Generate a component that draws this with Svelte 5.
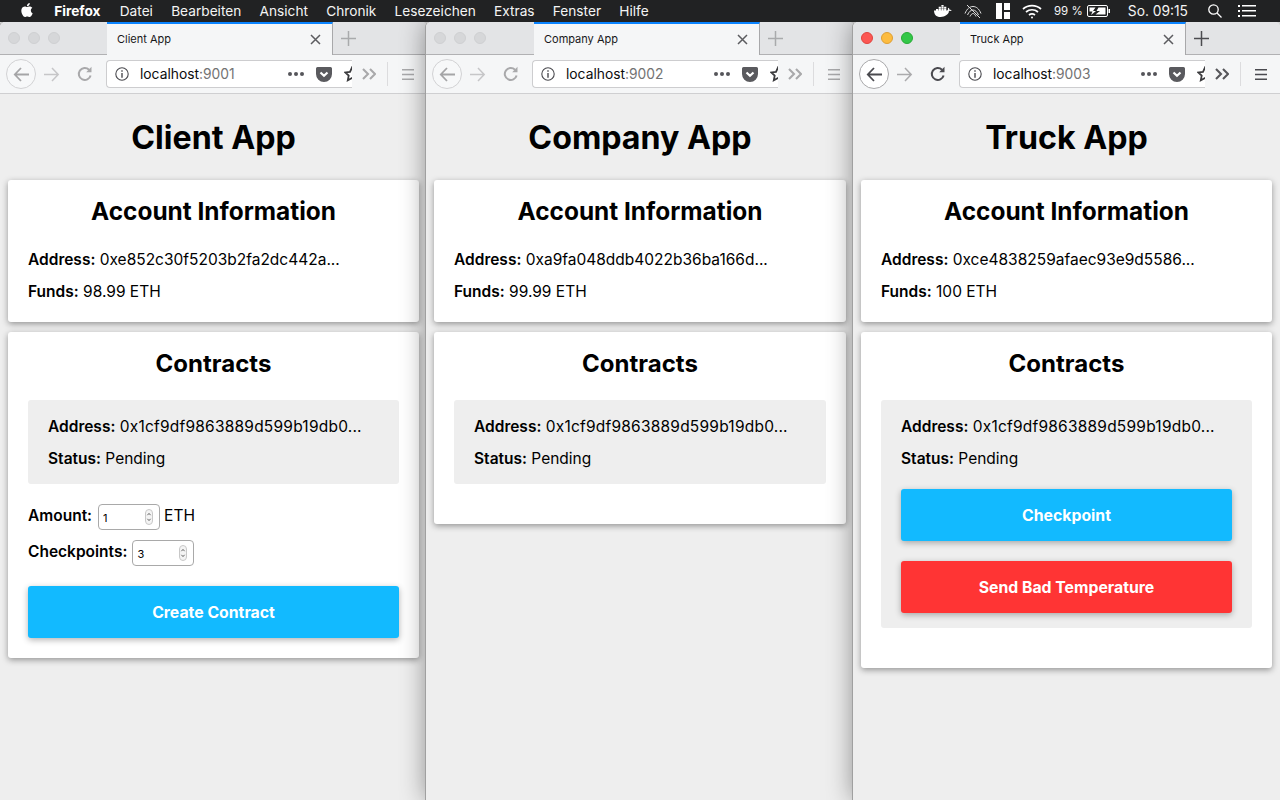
<script>
  const menus = ['Datei','Bearbeiten','Ansicht','Chronik','Lesezeichen','Extras','Fenster','Hilfe'];
  const windows = [
    { title:'Client App', port:'9001', address:'0xe852c30f5203b2fa2dc442a...', funds:'98.99 ETH', kind:'client', active:false },
    { title:'Company App', port:'9002', address:'0xa9fa048ddb4022b36ba166d...', funds:'99.99 ETH', kind:'company', active:false },
    { title:'Truck App', port:'9003', address:'0xce4838259afaec93e9d5586...', funds:'100 ETH', kind:'truck', active:true }
  ];
  const contract = '0x1cf9df9863889d599b19db0...';
</script>

{#snippet numberField(value)}
  <span class="num">
    <input type="text" value={value} readonly aria-label="number" />
    <svg class="spin" width="8" height="16" viewBox="0 0 8 16">
      <rect x=".5" y=".5" width="7" height="15" rx="3.5" fill="#f4f4f4" stroke="#c8c8c8"/>
      <path d="M2.4 6.2 4 4.4l1.6 1.8M2.4 9.8 4 11.6l1.6-1.8" fill="none" stroke="#555" stroke-width=".9"/>
    </svg>
  </span>
{/snippet}

<div class="screen">
  <header class="menubar">
    <div class="menu-left">
      <svg class="apple" width="14" height="16" viewBox="0 0 24 24" fill="#fff"><path d="M12.152 6.896c-.948 0-2.415-1.078-3.96-1.04-2.04.027-3.91 1.183-4.961 3.014-2.117 3.675-.546 9.103 1.519 12.09 1.013 1.454 2.208 3.09 3.792 3.039 1.52-.065 2.09-.987 3.935-.987 1.831 0 2.35.987 3.96.948 1.637-.026 2.676-1.48 3.676-2.948 1.156-1.688 1.636-3.325 1.662-3.415-.039-.013-3.182-1.221-3.22-4.857-.026-3.04 2.48-4.494 2.597-4.559-1.429-2.09-3.623-2.324-4.39-2.376-2-.156-3.675 1.09-4.61 1.09zM15.53 3.83c.843-1.012 1.4-2.427 1.245-3.83-1.207.052-2.662.805-3.532 1.818-.78.896-1.454 2.338-1.273 3.714 1.338.104 2.715-.688 3.559-1.701"/></svg>
      <strong class="app-name">Firefox</strong>
      {#each menus as m}<span>{m}</span>{/each}
    </div>
    <div class="menu-right">
      <svg class="st-docker" width="18" height="13" viewBox="0 0 18 13" fill="#fff"><path d="M0 6.6h14c.6-.1 1.1-.4 1.3-.8.6.2 1.7.2 2.5-.5-.5-.6-1.400-.8-2.200-.6-.1-.9-.6-1.500-1.200-1.900-.6.600-.8 1.600-.4 2.300-.4.200-.8.300-1.200.3H0c0 3.600 2 6.600 6.600 6.600 4.400 0 7.400-2.300 8.600-5.400z"/><path d="M2 4h2.200v2H2zM4.700 4h2.200v2H4.700zM7.400 4h2.200v2H7.400zM10.100 4h2.200v2h-2.200zM4.700 1.700h2.200v2H4.700zM7.400 1.700h2.200v2H7.400zM10.100 1.700h2.200v2h-2.200zM7.400-.6h2.200v2H7.400z"/></svg>
      <svg class="st-radio" width="18" height="15" viewBox="0 0 18 15" fill="none" stroke="#ddd" stroke-width="1"><path d="M1 9.500C3 4.500 6 2.500 9 2.500s6 2 8 7M3.500 11C5 7.500 7 6 9 6s4 1.500 5.500 5M6 12.500C7 10.500 8 9.500 9 9.500s2 1 3 3M3 1l13 13"/></svg>
      <svg class="st-bars" width="14" height="16" viewBox="0 0 14 16" fill="#fff"><path d="M0 0h6v16H0zM8 0h6v7H8zM8 9h6v7H8z"/></svg>
      <svg class="st-wifi" width="20" height="15" viewBox="0 0 20 15" fill="none" stroke="#fff" stroke-width="1.700"><path d="M1 5c5-4.500 13-4.500 18 0M4 8c3.500-3 8.500-3 12 0M7 11c1.700-1.400 4.300-1.400 6 0"/><circle cx="10" cy="13.500" r="1" fill="#fff" stroke="none"/></svg>
      <span class="st-pct">99 %</span>
      <svg class="st-batt" width="23" height="12" viewBox="0 0 23 12"><rect x=".5" y=".5" width="20" height="11" rx="1.500" fill="none" stroke="#fff"/><rect x="21.500" y="4" width="1.500" height="4" fill="#fff"/><path d="M2.500 2.500h6L6 6h3l-5 4 1.500-3.500h-3zM11.500 2.500h7v7h-10l4.500-3.500h-3.500z" fill="#fff"/></svg>
      <span class="st-clock">So. 09:15</span>
      <svg class="st-search" width="14" height="14" viewBox="0 0 14 14" fill="none" stroke="#fff" stroke-width="1.300"><circle cx="5.500" cy="5.500" r="4.700"/><path d="m9 9 4.500 4.500"/></svg>
      <svg class="st-list" width="18" height="12" viewBox="0 0 18 12" fill="#fff"><path d="M0 0h2v2H0zM0 5h2v2H0zM0 10h2v2H0zM4 0h14v1.600H4zM4 5h14v1.600H4zM4 10h14v1.600H4z"/></svg>
    </div>
  </header>

  <div class="desktop">
    {#each windows as w}
      <section class="win" class:active={w.active}>
        <div class="tabbar">
          <div class="lights">
            <i class="light l-close"></i><i class="light l-min"></i><i class="light l-zoom"></i>
          </div>
          <div class="tab">
            <span class="tab-title">{w.title}</span>
            <svg class="tab-close" width="11" height="11" viewBox="0 0 11 11" stroke-width="1.500" fill="none"><path d="m1 1 9 9M10 1l-9 9"/></svg>
          </div>
          <svg class="newtab" width="15" height="15" viewBox="0 0 15 15" stroke-width="1.500" fill="none"><path d="M7.500 0v15M0 7.500h15"/></svg>
        </div>

        <div class="toolbar">
          <span class="back">
            <svg width="17" height="15" viewBox="0 0 17 15" fill="none" stroke-width="1.800"><path d="M16 7.500H2M8 1 1.800 7.500 8 14"/></svg>
          </span>
          <svg class="fwd" width="17" height="15" viewBox="0 0 17 15" fill="none" stroke-width="1.500"><path d="M1 7.500h14M9 1l6.200 6.500L9 14"/></svg>
          <svg class="reload" width="16" height="16" viewBox="0 0 16 16" fill="none" stroke-width="2"><path d="M13.600 9.500A6 6 0 1 1 12 3.700"/><path d="M14.500.8v5.400H9.200z" fill="currentColor" stroke="none"/></svg>
          <div class="url">
            <svg class="info" width="14" height="14" viewBox="0 0 14 14" fill="none"><circle cx="7" cy="7" r="6.200" stroke="#4a4a4f" stroke-width="1.100"/><path d="M6.300 3.300h1.400v1.400H6.300zM6.300 6h1.400v4.700H6.300z" fill="#4a4a4f"/></svg>
            <span class="host">localhost<span class="port">:{w.port}</span></span>
            <span class="dots"><i></i><i></i><i></i></span>
            <svg class="pocket" width="16" height="15" viewBox="0 0 16 15"><path d="M1.500 0h13A1.500 1.500 0 0 1 16 1.500V7A8 8 0 0 1 0 7V1.500A1.500 1.500 0 0 1 1.500 0z" fill="#5a5a5e"/><path d="m4.500 5.500 3.500 3.300 3.500-3.300" fill="none" stroke="#fff" stroke-width="2.200"/></svg>
            <svg class="star" width="16" height="16" viewBox="0 0 16 16" fill="none" stroke="#3a3a3d" stroke-width="1.800"><path d="m8 1.500 2 4.300 4.700.6-3.400 3.200.9 4.700L8 12l-4.200 2.300.9-4.700L1.300 6.400 6 5.800z"/></svg>
          </div>
          <svg class="more" width="14" height="12" viewBox="0 0 14 12" fill="none" stroke-width="2.100"><path d="m1 1 5 5-5 5M8 1l5 5-5 5"/></svg>
          <span class="sep"></span>
          <svg class="burger" width="12" height="11" viewBox="0 0 12 11"><path d="M0 0h12v1.500H0zM0 4.700h12v1.500H0zM0 9.500h12V11H0z" fill="currentColor"/></svg>
        </div>

        <main class="page">
          <h1>{w.title}</h1>
          <div class="card">
            <h2>Account Information</h2>
            <p><b>Address:</b> {w.address}</p>
            <p><b>Funds:</b> {w.funds}</p>
          </div>
          <div class="card contracts">
            <h2>Contracts</h2>
            <div class="contract">
              <p><b>Address:</b> <span class="hash">{contract}</span></p>
              <p><b>Status:</b> Pending</p>
              {#if w.kind === 'truck'}
                <button class="btn btn-blue first">Checkpoint</button>
                <button class="btn btn-red">Send Bad Temperature</button>
              {/if}
            </div>
            {#if w.kind === 'client'}
              <div class="field amount"><b>Amount:</b> {@render numberField('1')} <span class="unit">ETH</span></div>
              <div class="field second"><b>Checkpoints:</b> {@render numberField('3')}</div>
              <button class="btn btn-blue create">Create Contract</button>
            {/if}
          </div>
        </main>
      </section>
    {/each}
  </div>
</div>

<style>
  :global(body) { margin: 0; background: #eee; }
  .screen { width: 1280px; height: 800px; overflow: hidden; display: flex; flex-direction: column; font-family: Inter, "Liberation Sans", sans-serif; color: #000; }

  .menubar { height: 22px; flex: none; background: #212223; color: #f4f4f4; display: flex; justify-content: space-between; align-items: center; font-size: 13.700px; position: relative; z-index: 5; }
  .menu-left { display: flex; align-items: center; gap: 18.200px; padding-left: 20px; }
  .apple { margin-right: 2px; margin-top: -2px; }
  .app-name { font-weight: 700; color: #fff; margin-right: 1px; }
  .menu-right { display: flex; align-items: center; padding-right: 24px; }
  .st-radio { margin-left: 12px; }
  .st-bars { margin-left: 14px; }
  .st-wifi { margin-left: 12px; }
  .st-pct { margin-left: 12px; font-size: 11.500px; }
  .st-batt { margin-left: 4px; }
  .st-clock { margin-left: 18px; font-size: 13.800px; }
  .st-search { margin-left: 20px; }
  .st-list { margin-left: 16px; }

  .desktop { flex: 1; display: flex; min-height: 0; }
  .win { flex: 0 0 427px; display: flex; flex-direction: column; background: #eee; border-radius: 5px 5px 0 0; position: relative; box-shadow: -1px 0 0 #a0a0a0, 0 0 26px rgba(0,0,0,.42); clip-path: inset(0 0 0 -40px); }
  .win + .win { margin-left: -1px; }
  .win:nth-child(2) { flex-basis: 428px; }

  .tabbar { height: 33px; flex: none; background: #e3e4e6; border-bottom: 1px solid #b1b1b3; box-sizing: border-box; display: flex; align-items: center; border-radius: 5px 5px 0 0; }
  .lights { width: 107px; flex: none; display: flex; gap: 8px; padding-left: 8px; box-sizing: border-box; }
  .light { width: 12px; height: 12px; border-radius: 50%; background: #d6d7d9; border: 1px solid #cfd0d2; box-sizing: border-box; }
  .win.active .l-close { background: #fc5753; border-color: #e0443e; }
  .win.active .l-min { background: #fdbc40; border-color: #de9f34; }
  .win.active .l-zoom { background: #33c748; border-color: #27aa35; }
  .tab { width: 226px; height: 33px; flex: none; box-sizing: border-box; background: #f5f6f7; border-top: 2px solid #0a84ff; border-right: 1px solid #a8a8aa; display: flex; align-items: center; justify-content: space-between; padding: 0 11px 0 10px; }
  .win:nth-child(2) .tab { margin-left: 1px; }
  .tab-title { font-size: 11px; color: #18181a; }
  .tab-close { stroke: #5c5c60; }
  .newtab { margin-left: 8px; stroke: #a9aaac; }
  .win.active .newtab { stroke: #4c4c50; }

  .toolbar { height: 39px; flex: none; box-sizing: border-box; background: #f5f6f7; border-bottom: 1px solid #cfcfd1; display: flex; align-items: center; color: #a9a9ab; position: relative; }
  .back { width: 30px; height: 30px; margin-left: 6px; flex: none; box-sizing: border-box; border: 1px solid #d2d2d4; border-radius: 50%; background: #f7f8f9; display: flex; align-items: center; justify-content: center; }
  .back svg { stroke: #a5a5a7; }
  .win.active .back { border-color: #a9a9ab; background: #fff; }
  .win.active .back svg { stroke: #4a4a4f; }
  .fwd { margin-left: 7px; stroke: #c6c6c8; flex: none; }
  .reload { margin-left: 17px; stroke: #a9a9ab; color: #a9a9ab; flex: none; }
  .win.active .fwd { stroke: #ababad; }
  .win.active .reload { stroke: #4a4a4f; color: #4a4a4f; }
  .url { width: 246px; height: 28px; margin-left: 13px; flex: none; box-sizing: border-box; background: #fff; border: 1px solid #cdcdcf; border-right: 0; border-radius: 4px 0 0 4px; overflow: hidden; display: flex; align-items: center; padding-left: 8px; }
  .info { flex: none; }
  .host { margin-left: 11px; font-size: 13.800px; color: #0c0c0d; width: 132px; flex: none; }
  .port { color: #737373; }
  .dots { display: flex; gap: 2px; margin-left: 16px; flex: none; }
  .dots i { width: 4px; height: 4px; border-radius: 50%; background: #55555a; }
  .pocket { margin-left: 12px; flex: none; }
  .star { margin-left: 12px; flex: none; }
  .more { margin-left: 10px; stroke: #a9a9ab; flex: none; }
  .win.active .more { stroke: #56565a; }
  .sep { width: 1px; height: 24px; background: #dcdcde; margin-left: 11px; flex: none; }
  .burger { margin-left: 14px; color: #a9a9ab; flex: none; }
  .win.active .burger { color: #4a4a4f; }

  .page { flex: 1; padding: 25px 8px 0; background: #eee; }
  h1 { margin: 0 0 23px; font-size: 32.200px; line-height: 38px; font-weight: 700; text-align: center; }
  .card { background: #fff; border-radius: 3px; box-shadow: 0 2px 6px rgba(0,0,0,.38); padding: 16px 20px 18px; margin-bottom: 10px; }
  h2 { margin: 0 0 22px; font-size: 24.400px; line-height: 30px; font-weight: 700; text-align: center; }
  .contracts { padding: 17px 20px 20px; }
  .contracts h2 { margin-bottom: 21px; font-size: 24px; }
  p { margin: 0 0 8px; font-size: 15.500px; line-height: 24px; white-space: nowrap; }
  p:last-child { margin-bottom: 0; }
  b { font-weight: 600; }
  .hash { letter-spacing: .22px; }
  .contract { background: #eee; border-radius: 3px; padding: 15px 20px 13px; margin-bottom: 20px; }
  .field { display: flex; align-items: center; gap: 5px; font-size: 15.500px; height: 26px; }
  .field b, .unit { margin-top: -4px; }
  .field.second { margin-top: 10px; }
  .amount .num { margin-left: 1px; margin-right: -1px; }
  .num { width: 62px; height: 26px; box-sizing: border-box; border: 1px solid #a9a9a9; border-radius: 4px; background: #fff; display: flex; align-items: center; padding: 0 6px 0 4px; }
  .num input { flex: 1; min-width: 0; width: 10px; border: 0; outline: 0; padding: 1px 0 0; font: 11px Inter, sans-serif; color: #000; background: transparent; }
  .spin { flex: none; }
  .btn { display: block; width: 100%; height: 52px; border: 0; border-radius: 3px; color: #fff; font: 700 15.800px Inter, sans-serif; box-shadow: 0 2px 6px rgba(0,0,0,.3); padding: 0; }
  .btn-blue { background: #12baff; }
  .btn-red { background: #ff3434; margin-top: 20px; margin-bottom: 2px; }
  .first { margin-top: 18px; }
  .create { margin-top: 20px; }
</style>
